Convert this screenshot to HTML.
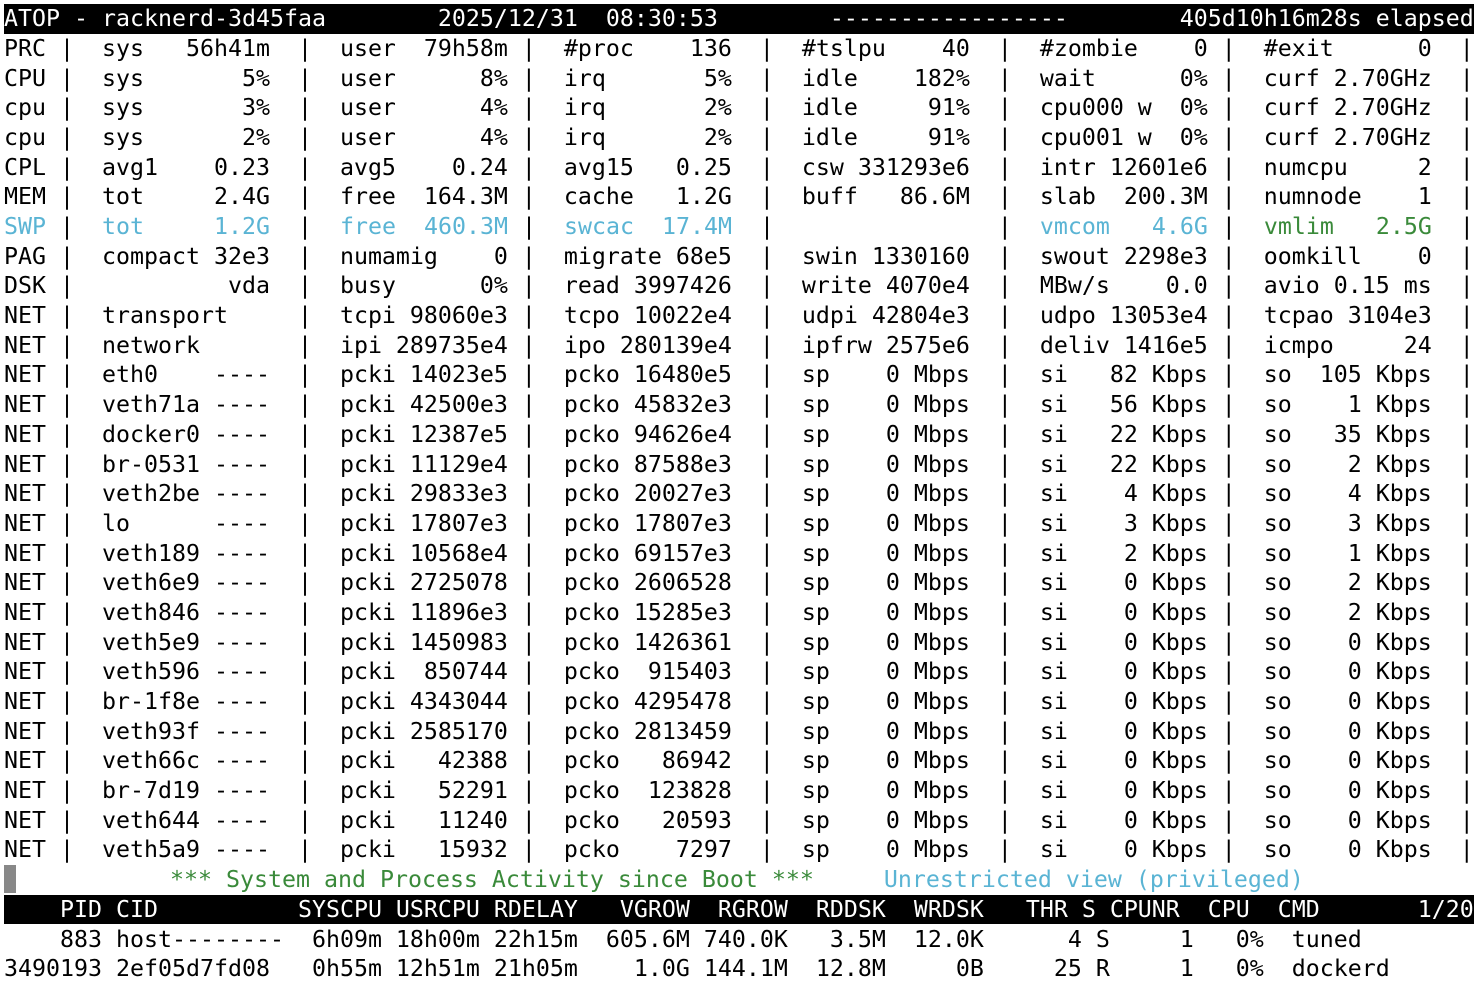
<!DOCTYPE html>
<html><head><meta charset="utf-8"><style>
html,body{margin:0;padding:0;background:#fff;width:1474px;height:962px;overflow:hidden}
pre{position:absolute;left:4px;top:4.2px;margin:0;font-family:"DejaVu Sans Mono","Liberation Mono",monospace;font-size:23.25px;line-height:29.68px;color:#000;white-space:pre}
.bar{background:#000;color:#fff;display:inline-block;width:1470px;height:29.68px;vertical-align:top}
.b{color:#5ab4d4}.g{color:#3a8a3a}
.cur{display:inline-block;width:12px;height:28px;background:#888;vertical-align:top}
</style></head><body>
<pre><span class="bar">ATOP - racknerd-3d45faa        2025/12/31  08:30:53        -----------------        405d10h16m28s elapsed</span>
PRC |  sys   56h41m  |  user  79h58m |  #proc    136  |  #tslpu    40  |  #zombie    0 |  #exit      0  |
CPU |  sys       5%  |  user      8% |  irq       5%  |  idle    182%  |  wait      0% |  curf 2.70GHz  |
cpu |  sys       3%  |  user      4% |  irq       2%  |  idle     91%  |  cpu000 w  0% |  curf 2.70GHz  |
cpu |  sys       2%  |  user      4% |  irq       2%  |  idle     91%  |  cpu001 w  0% |  curf 2.70GHz  |
CPL |  avg1    0.23  |  avg5    0.24 |  avg15   0.25  |  csw 331293e6  |  intr 12601e6 |  numcpu     2  |
MEM |  tot     2.4G  |  free  164.3M |  cache   1.2G  |  buff   86.6M  |  slab  200.3M |  numnode    1  |
<span class="b">SWP</span> |  <span class="b">tot     1.2G</span>  |  <span class="b">free  460.3M</span> |  <span class="b">swcac  17.4M</span>  |                |  <span class="b">vmcom   4.6G</span> |  <span class="g">vmlim   2.5G</span>  |
PAG |  compact 32e3  |  numamig    0 |  migrate 68e5  |  swin 1330160  |  swout 2298e3 |  oomkill    0  |
DSK |           vda  |  busy      0% |  read 3997426  |  write 4070e4  |  MBw/s    0.0 |  avio 0.15 ms  |
NET |  transport     |  tcpi 98060e3 |  tcpo 10022e4  |  udpi 42804e3  |  udpo 13053e4 |  tcpao 3104e3  |
NET |  network       |  ipi 289735e4 |  ipo 280139e4  |  ipfrw 2575e6  |  deliv 1416e5 |  icmpo     24  |
NET |  eth0    ----  |  pcki 14023e5 |  pcko 16480e5  |  sp    0 Mbps  |  si   82 Kbps |  so  105 Kbps  |
NET |  veth71a ----  |  pcki 42500e3 |  pcko 45832e3  |  sp    0 Mbps  |  si   56 Kbps |  so    1 Kbps  |
NET |  docker0 ----  |  pcki 12387e5 |  pcko 94626e4  |  sp    0 Mbps  |  si   22 Kbps |  so   35 Kbps  |
NET |  br-0531 ----  |  pcki 11129e4 |  pcko 87588e3  |  sp    0 Mbps  |  si   22 Kbps |  so    2 Kbps  |
NET |  veth2be ----  |  pcki 29833e3 |  pcko 20027e3  |  sp    0 Mbps  |  si    4 Kbps |  so    4 Kbps  |
NET |  lo      ----  |  pcki 17807e3 |  pcko 17807e3  |  sp    0 Mbps  |  si    3 Kbps |  so    3 Kbps  |
NET |  veth189 ----  |  pcki 10568e4 |  pcko 69157e3  |  sp    0 Mbps  |  si    2 Kbps |  so    1 Kbps  |
NET |  veth6e9 ----  |  pcki 2725078 |  pcko 2606528  |  sp    0 Mbps  |  si    0 Kbps |  so    2 Kbps  |
NET |  veth846 ----  |  pcki 11896e3 |  pcko 15285e3  |  sp    0 Mbps  |  si    0 Kbps |  so    2 Kbps  |
NET |  veth5e9 ----  |  pcki 1450983 |  pcko 1426361  |  sp    0 Mbps  |  si    0 Kbps |  so    0 Kbps  |
NET |  veth596 ----  |  pcki  850744 |  pcko  915403  |  sp    0 Mbps  |  si    0 Kbps |  so    0 Kbps  |
NET |  br-1f8e ----  |  pcki 4343044 |  pcko 4295478  |  sp    0 Mbps  |  si    0 Kbps |  so    0 Kbps  |
NET |  veth93f ----  |  pcki 2585170 |  pcko 2813459  |  sp    0 Mbps  |  si    0 Kbps |  so    0 Kbps  |
NET |  veth66c ----  |  pcki   42388 |  pcko   86942  |  sp    0 Mbps  |  si    0 Kbps |  so    0 Kbps  |
NET |  br-7d19 ----  |  pcki   52291 |  pcko  123828  |  sp    0 Mbps  |  si    0 Kbps |  so    0 Kbps  |
NET |  veth644 ----  |  pcki   11240 |  pcko   20593  |  sp    0 Mbps  |  si    0 Kbps |  so    0 Kbps  |
NET |  veth5a9 ----  |  pcki   15932 |  pcko    7297  |  sp    0 Mbps  |  si    0 Kbps |  so    0 Kbps  |
<span class="cur"></span>           <span class="g">*** System and Process Activity since Boot ***</span>     <span class="b">Unrestricted view (privileged)</span>
<span class="bar">    PID CID          SYSCPU USRCPU RDELAY   VGROW  RGROW  RDDSK  WRDSK   THR S CPUNR  CPU  CMD       1/20</span>
    883 host--------  6h09m 18h00m 22h15m  605.6M 740.0K   3.5M  12.0K      4 S     1   0%  tuned
3490193 2ef05d7fd08   0h55m 12h51m 21h05m    1.0G 144.1M  12.8M     0B     25 R     1   0%  dockerd</pre>
</body></html>
